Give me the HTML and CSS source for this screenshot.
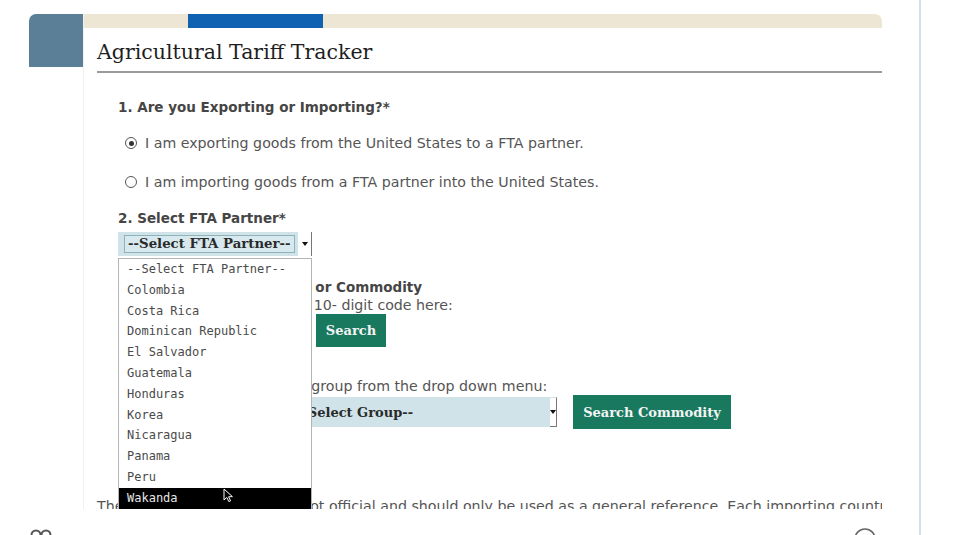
FILE: index.html
```html
<!DOCTYPE html>
<html lang="en">
<head>
<meta charset="utf-8">
<title>Agricultural Tariff Tracker</title>
<link rel="stylesheet" href="styles.css">
</head>
<body>
<div class="page">
  <div class="frame">
    <div class="side"></div>
    <div class="main">
      <div class="topbar"><span class="topbar-accent"></span></div>
      <div class="content">
        <h1 class="title">Agricultural Tariff Tracker</h1>
        <div class="form">
          <div class="label q1">1. Are you Exporting or Importing?*</div>
          <div class="radio-row r1"><span class="radio checked"></span><span>I am exporting goods from the United States to a FTA partner.</span></div>
          <div class="radio-row r2"><span class="radio"></span><span>I am importing goods from a FTA partner into the United States.</span></div>
          <div class="label q2">2. Select FTA Partner*</div>
          <div class="select-wrap">
            <div class="select partner">
              <span class="select-value"><span class="focus">--Select FTA Partner--</span></span>
              <span class="select-arrow"><span class="tri"></span></span>
            </div>
            <ul class="dropdown">
              <li>--Select FTA Partner--</li>
              <li>Colombia</li>
              <li>Costa Rica</li>
              <li>Dominican Republic</li>
              <li>El Salvador</li>
              <li>Guatemala</li>
              <li>Honduras</li>
              <li>Korea</li>
              <li>Nicaragua</li>
              <li>Panama</li>
              <li>Peru</li>
              <li class="active">Wakanda
                <svg class="cursor" width="11" height="15" viewBox="0 0 11 15"><path d="M1 1 L1 12 L3.8 9.4 L5.8 13.6 L7.6 12.8 L5.6 8.8 L9.4 8.6 Z" fill="#000" stroke="#fff" stroke-width="1"/></svg>
              </li>
            </ul>
          </div>
          <div class="label q3">3. Search by HTS Code(s) or Commodity</div>
          <div class="hint">Please enter the HTS 8-, or 10- digit code here:</div>
          <div class="code-row">
            <span class="code-input"></span>
            <button class="btn btn-search">Search</button>
          </div>
          <div class="hint hint2">Or, select your commodity group from the drop down menu:</div>
          <div class="group-row">
            <div class="select group">
              <span class="select-value">--Select Group--</span>
              <span class="select-arrow boxed"><span class="tri"></span></span>
            </div>
            <button class="btn btn-commodity">Search Commodity</button>
          </div>
        </div>
        <p class="note">The tariff rates provided are not official and should only be used as a general reference. Each importing country determines its own rates.</p>
      </div>
    </div>
  </div>
  <div class="footer">
    <svg class="foot-icon left" width="22" height="8" viewBox="0 0 22 8"><circle cx="6" cy="8" r="4.5" fill="none" stroke="#555" stroke-width="2"/><circle cx="16" cy="8" r="4.5" fill="none" stroke="#555" stroke-width="2"/></svg>
    <svg class="foot-icon right" width="24" height="8" viewBox="0 0 24 8"><circle cx="12" cy="12" r="10" fill="none" stroke="#666" stroke-width="1.6"/></svg>
  </div>
</div>
</body>
</html>
```
FILE: styles.css
```css
html, body {
  margin: 0;
  padding: 0;
  background: #fff;
}
body {
  font-family: "DejaVu Sans", Verdana, sans-serif;
  overflow: hidden;
}
.page {
  width: 919px;
  height: 535px;
  border-right: 2px solid #d6dfe9;
  display: flex;
  flex-direction: column;
  overflow: hidden;
}
.frame {
  display: flex;
  padding: 14px 0 0 29px;
  height: 495px;
  flex: none;
}
.side {
  width: 55px;
  height: 53px;
  background: #5b7f96;
  border-top-left-radius: 7px;
  flex: none;
}
.main {
  width: 798px;
  border-left: 1px solid #f1f1f1;
  margin-left: -1px;
  overflow: hidden;
  display: flex;
  flex-direction: column;
}
.topbar {
  height: 14px;
  background: #ede6d5;
  border-top-right-radius: 7px;
  display: flex;
  flex: none;
}
.topbar-accent {
  margin-left: 104px;
  width: 135px;
  background: #0e62b1;
}
.content {
  padding-left: 13px;
}
.title {
  margin: 0;
  padding: 9px 0 3px 0;
  font-family: "DejaVu Serif", Georgia, serif;
  font-weight: normal;
  font-size: 20.5px;
  line-height: 31px;
  color: #1e1e1e;
  border-bottom: 2px solid #9a9a9a;
}
.form {
  padding-left: 21px;
  display: flex;
  flex-direction: column;
  align-items: flex-start;
}
.label {
  font-weight: bold;
  font-size: 13.5px;
  line-height: 18px;
  color: #454545;
}
.q1 { margin-top: 25px; }
.radio-row {
  display: flex;
  align-items: center;
  gap: 8px;
  font-size: 14.2px;
  line-height: 18px;
  color: #555;
  padding-left: 7px;
}
.r1 { margin-top: 18px; }
.r2 { margin-top: 21px; }
.radio {
  width: 10px;
  height: 10px;
  border: 1px solid #555;
  border-radius: 50%;
  display: flex;
  align-items: center;
  justify-content: center;
  flex: none;
}
.radio.checked::after {
  content: "";
  width: 5px;
  height: 5px;
  border-radius: 50%;
  background: #333;
}
.q2 { margin-top: 18px; }
.select-wrap {
  position: relative;
  margin-top: 5px;
}
.select {
  display: flex;
  align-items: stretch;
  font-family: "DejaVu Serif", Georgia, serif;
  font-weight: bold;
  font-size: 13px;
  color: #2a2a2a;
}
.select.partner {
  height: 24px;
  width: 194px;
  font-size: 13.3px;
}
.select .select-value {
  flex: 1;
  background: #cfe3e9;
  display: flex;
  align-items: center;
}
.partner .select-value {
  padding-left: 6px;
}
.focus {
  border: 1px solid #8fb3ba;
  background: #d7e9ee;
  padding: 0 3px;
  line-height: 16px;
}
.select-arrow {
  width: 13px;
  background: #fff;
  border-right: 1px solid #777;
  display: flex;
  align-items: center;
  justify-content: center;
}
.tri {
  width: 0;
  height: 0;
  border-left: 3px solid transparent;
  border-right: 3px solid transparent;
  border-top: 4px solid #111;
}
.dropdown {
  position: absolute;
  top: 26px;
  left: 0;
  width: 192px;
  margin: 0;
  padding: 0;
  list-style: none;
  background: #fff;
  border: 1px solid #b5b5b5;
  z-index: 5;
}
.dropdown li {
  height: 20.8px;
  line-height: 20.8px;
  padding-left: 8px;
  font-family: "DejaVu Sans Mono", monospace;
  font-size: 12px;
  color: #4a4a4a;
  position: relative;
}
.dropdown li.active {
  background: #000;
  color: #e6e6e6;
}
.cursor {
  position: absolute;
  left: 104px;
  top: 0;
}
.q3 { margin-top: 22px; }
.hint {
  font-size: 14.2px;
  line-height: 18px;
  color: #555;
}
.code-row {
  display: flex;
  align-items: center;
  gap: 10px;
}
.code-input {
  width: 186px;
  height: 22px;
  border: 1px solid #aaa;
}
.btn {
  border: none;
  background: #19795e;
  color: #f4f4f4;
  font-family: "DejaVu Serif", Georgia, serif;
  font-weight: bold;
  font-size: 13px;
  padding: 0;
}
.btn-search {
  width: 70px;
  height: 33px;
}
.hint2 { margin-top: 30px; }
.group-row {
  display: flex;
  align-items: center;
  gap: 16px;
  height: 34px;
}
.select.group {
  width: 439px;
  height: 30px;
}
.group .select-value {
  padding-left: 179px;
}
.select-arrow.boxed {
  width: 7px;
  border-bottom: 1px solid #777;
  border-top: 1px solid #ddd;
  box-sizing: border-box;
}
.btn-commodity {
  width: 158px;
  height: 34px;
}
.note {
  margin: 68px 0 0 0;
  font-size: 14.2px;
  line-height: 18px;
  color: #555;
  white-space: nowrap;
}
.footer {
  display: flex;
  justify-content: space-between;
  align-items: flex-end;
  padding: 0 42px 0 30px;
  flex: 1;
}
.foot-icon {
  display: block;
}
```
